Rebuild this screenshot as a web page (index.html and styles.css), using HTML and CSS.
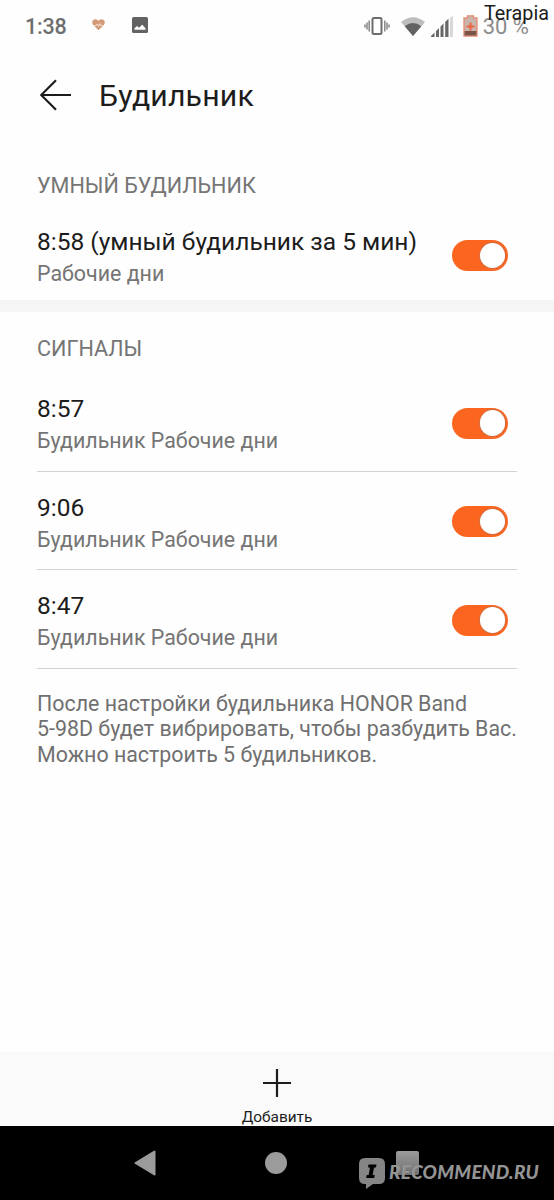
FILE: index.html
```
<!DOCTYPE html>
<html lang="ru">
<head>
  <meta charset="UTF-8">
  <meta name="viewport" content="width=device-width, initial-scale=1.0">
  <title>Будильник</title>
  <link rel="stylesheet" href="styles.css">
</head>
<body>
  <div class="status-bar">
    <span class="clock">1:38</span>
    <svg class="icon-heart" width="13" height="12" viewBox="0 0 14 13">
      <path d="M7 12.3 1.3 6.6C-1.1 3.5.8.4 3.5.4 5.2.4 6.3 1.2 7 2.3 7.7 1.2 8.8.4 10.5.4c2.7 0 4.6 3.1 2.2 6.2z" fill="#d29a78"/>
      <path d="M2.500 7h2l1-1.500 1.600 2.500L8.500 5 9.500 7h2" fill="none" stroke="#fff1e8" stroke-width=".9"/>
    </svg>
    <svg class="icon-image" width="16" height="16" viewBox="0 0 16 16">
      <rect width="16" height="16" rx="1.500" fill="#636363"/>
      <path d="M2.500 12.800v-1.500l2.500-2.300 2 1.800 3.200-3.100 3.300 3.500v1.600z" fill="#fff"/>
    </svg>
    <div class="status-right">
      <svg width="26" height="20" viewBox="0 0 26 20">
        <rect x="8.500" y="2" width="9" height="16" rx="1.500" fill="none" stroke="#6c6c6c" stroke-width="2"/>
        <path d="M5.200 4.500v11M3 6.500v7M1 8.500v3M20.800 4.500v11M23 6.500v7M25 8.500v3" stroke="#858585" stroke-width="1.500"/>
      </svg>
      <svg class="icon-wifi" width="24" height="19" viewBox="0 0 24 19">
        <path d="M0 5Q12-4.500 24 5L12 19z" fill="#bdbdbd"/>
        <path d="M3.700 9.300Q12 2.500 20.300 9.300L12 19z" fill="#626262"/>
      </svg>
      <svg class="icon-signal" width="22" height="21" viewBox="0 0 22 21">
        <path d="M19 1.500 22 0v21h-3z" fill="#d8d8d8"/>
        <path d="M0 21v-1l3.500-3.500V21zM5 21v-6l3-3v9zM9.500 21V10.500l3-3V21zM14.200 21V6l3.300-3.500V21z" fill="#686868"/>
      </svg>
      <svg class="icon-battery" width="15" height="22" viewBox="0 0 15 22">
        <path d="M1 3h3.500V.800h6V3H14v18H1z" fill="#c9b5ab" stroke="#e58d74" stroke-width="1.300"/>
        <path d="M1.600 16h11.800v4.500H1.600z" fill="#7b5348"/>
        <path d="M7.500 7.500v8M3.500 11.500h8" stroke="#ee6545" stroke-width="2"/>
      </svg>
      <span class="percent">30 %</span>
    </div>
    <span class="watermark-name">Terapia</span>
  </div>

  <header class="header">
    <svg width="32" height="32" viewBox="0 0 32 32">
      <path d="M31 16H1.500M16 1.200 1.200 16 16 30.800" fill="none" stroke="#1c1c1c" stroke-width="2.200"/>
    </svg>
    <h1 class="title">Будильник</h1>
  </header>

  <main class="content">
    <section class="smart">
      <h2 class="section-title">УМНЫЙ БУДИЛЬНИК</h2>
      <div class="alarm">
        <div>
          <div class="time">8:58 (умный будильник за 5 мин)</div>
          <div class="days">Рабочие дни</div>
        </div>
        <div class="toggle"></div>
      </div>
    </section>

    <section class="signals">
      <h2 class="section-title">СИГНАЛЫ</h2>
      <div class="alarm">
        <div>
          <div class="time">8:57</div>
          <div class="days">Будильник Рабочие дни</div>
        </div>
        <div class="toggle"></div>
      </div>
      <div class="alarm">
        <div>
          <div class="time">9:06</div>
          <div class="days">Будильник Рабочие дни</div>
        </div>
        <div class="toggle"></div>
      </div>
      <div class="alarm">
        <div>
          <div class="time">8:47</div>
          <div class="days">Будильник Рабочие дни</div>
        </div>
        <div class="toggle"></div>
      </div>
      <p class="note">После настройки будильника HONOR Band<br>5-98D будет вибрировать, чтобы разбудить Вас.<br>Можно настроить 5 будильников.</p>
    </section>
  </main>

  <div class="add-bar">
    <svg width="28" height="28" viewBox="0 0 28 28">
      <path d="M14 0v28M0 14h28" stroke="#1c1c1c" stroke-width="2.200"/>
    </svg>
    <span class="add-label">Добавить</span>
  </div>

  <nav class="nav-bar">
    <svg width="22" height="26" viewBox="0 0 22 26">
      <path d="M20.500 1.500v23L1.500 13z" fill="#9b9b9b" stroke="#9b9b9b" stroke-width="2" stroke-linejoin="round"/>
    </svg>
    <div class="nav-home"></div>
    <div class="nav-recent"></div>
    <div class="site-mark">
      <svg width="26" height="31" viewBox="0 0 26 31">
        <path d="M6 0h14q6 0 6 6v14q0 6-6 6h-6l-7 5v-5H6q-6 0-6-6V6q0-6 6-6z" fill="#858585"/>
        <path d="M9.500 6.500h8l-.5 3h-2l-1.300 7.500h2l-.5 3h-8l.5-3h2L11 9.500H9z" fill="#000"/>
      </svg>
      <span class="site-name">RECOMMEND.RU</span>
    </div>
  </nav>
</body>
</html>
```
FILE: styles.css
```
* {
  box-sizing: border-box;
}

body {
  margin: 0;
  height: 1200px;
  display: flex;
  flex-direction: column;
  background: #fefefe;
  color: #1c1c1c;
  font-family: Roboto, "Noto Sans", sans-serif;
  overflow: hidden;
}

h1, h2, p {
  margin: 0;
  font-weight: 400;
}

svg {
  display: block;
  flex: none;
}

/* status bar */
.status-bar {
  position: relative;
  height: 52px;
  flex: none;
  display: flex;
  align-items: center;
  padding: 0 25px;
}

.clock {
  width: 67px;
  font-size: 21.5px;
  font-weight: 500;
  line-height: 54px;
  padding-top: 2px;
  letter-spacing: -0.2px;
  color: #6e6e6e;
}

.icon-heart {
  margin-bottom: 2px;
}

.icon-image {
  margin-left: 27px;
  margin-bottom: 2px;
}

.status-right {
  display: flex;
  align-items: center;
  margin-left: auto;
}

.icon-wifi {
  margin-left: 11px;
}

.icon-signal {
  margin-left: 6px;
}

.icon-battery {
  margin-left: 10px;
  margin-bottom: 1px;
}

.percent {
  margin-left: 5px;
  font-size: 22px;
  color: #8c8c8c;
  white-space: nowrap;
}

.watermark-name {
  position: absolute;
  top: 1px;
  right: 5px;
  font-size: 19.8px;
  line-height: 26px;
  color: #1c1c1c;
}

/* header */
.header {
  height: 88px;
  flex: none;
  display: flex;
  align-items: center;
  gap: 27px;
  padding: 0 40px 3px;
}

.title {
  font-size: 30.2px;
  line-height: 36px;
  letter-spacing: 0.2px;
  padding-top: 3px;
}

/* alarms */
.content {
  flex: 1;
}

.section-title {
  font-size: 21.6px;
  line-height: 26px;
  color: #757575;
}

.smart {
  height: 172px;
  padding: 33px 46px 0 37px;
  border-bottom: 12px solid #f5f5f5;
}

.smart .section-title {
  margin-bottom: 28px;
}

.signals {
  padding: 24px 37px 0;
}

.signals .section-title {
  margin-bottom: 11px;
}

.alarm {
  display: flex;
  justify-content: space-between;
}

.signals .alarm {
  height: 98.5px;
  padding: 21px 9px 0 0;
  border-bottom: 1px solid #d2d2d2;
}

.time {
  font-size: 24.5px;
  line-height: 30px;
  white-space: nowrap;
}

.days {
  margin-top: 4px;
  font-size: 21.4px;
  line-height: 26px;
  color: #757575;
}

.toggle {
  flex: none;
  width: 56px;
  height: 31px;
  margin-top: 13px;
  border-radius: 16px;
  background: #fb651f;
  display: flex;
  justify-content: flex-end;
  align-items: center;
  padding-right: 3px;
}

.signals .toggle {
  margin-top: 13.5px;
}

.toggle::after {
  content: "";
  width: 25.5px;
  height: 25.5px;
  border-radius: 50%;
  background: #fff;
  box-shadow: 0 0 0 1px #d56d3f;
}

.note {
  margin-top: 22px;
  font-size: 21.4px;
  line-height: 25.5px;
  color: #707070;
  white-space: nowrap;
}

/* bottom */
.add-bar {
  height: 74px;
  flex: none;
  display: flex;
  flex-direction: column;
  align-items: center;
  padding-top: 17px;
  background: #fafafa;
}

.add-label {
  margin-top: 9px;
  font-size: 15.4px;
  line-height: 22px;
}

.nav-bar {
  position: relative;
  height: 74px;
  flex: none;
  display: flex;
  align-items: center;
  justify-content: space-between;
  padding: 0 135px 0 134px;
  background: #000;
}

.nav-home {
  width: 22px;
  height: 22px;
  border-radius: 50%;
  background: #9b9b9b;
}

.nav-recent {
  width: 23px;
  height: 24px;
  border-radius: 2px;
  background: linear-gradient(#9b9b9b, #707070);
}

.site-mark {
  position: absolute;
  left: 359px;
  top: 32px;
  display: flex;
  gap: 4px;
}

.site-name {
  font-family: Lato, sans-serif;
  font-size: 19px;
  font-weight: 900;
  font-style: italic;
  line-height: 27px;
  letter-spacing: 0.25px;
  color: #949494;
}
```
